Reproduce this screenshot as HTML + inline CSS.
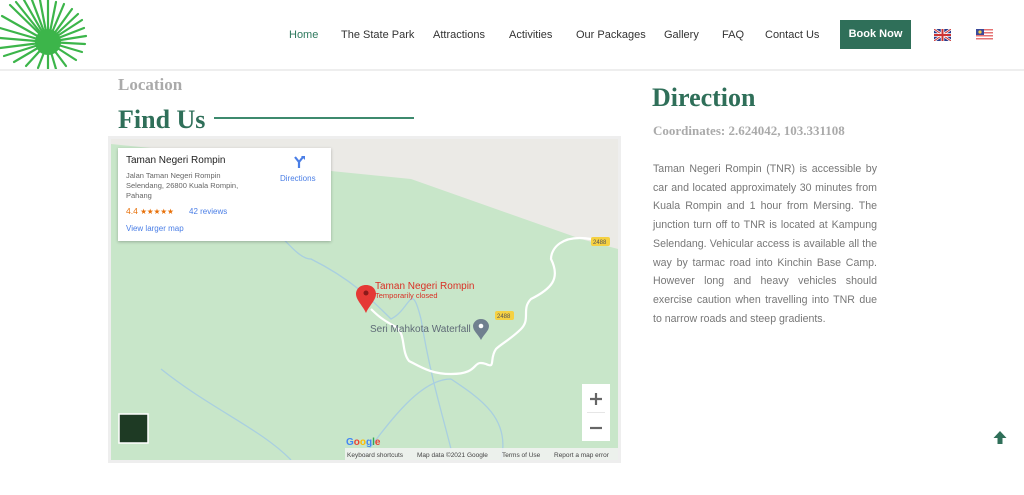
<!DOCTYPE html>
<html><head><meta charset="utf-8"><style>
*{margin:0;padding:0;box-sizing:border-box}
body{width:1024px;height:495px;background:#fff;position:relative;overflow:hidden;font-family:"Liberation Sans",sans-serif}
.a{position:absolute;white-space:nowrap}
.nav{top:29px;font-size:11px;color:#333}
.serif{font-family:"Liberation Serif",serif;font-weight:bold}
.p{position:absolute;left:653px;top:160px;width:224px;font-size:10.6px;line-height:18.7px;color:#777;text-align:justify;white-space:normal}
</style></head><body>
<svg class="a" style="left:0;top:0" width="90" height="70" viewBox="0 0 90 70">
<g stroke="#3cb54a" stroke-width="2.2" stroke-linecap="round">
<line x1="48" y1="42" x2="10" y2="5"/><line x1="48" y1="42" x2="16" y2="2"/><line x1="48" y1="42" x2="24" y2="0"/><line x1="48" y1="42" x2="32" y2="0"/><line x1="48" y1="42" x2="40" y2="0"/><line x1="48" y1="42" x2="48" y2="0"/><line x1="48" y1="42" x2="56" y2="2"/><line x1="48" y1="42" x2="64" y2="4"/><line x1="48" y1="42" x2="72" y2="9"/><line x1="48" y1="42" x2="78" y2="14"/><line x1="48" y1="42" x2="82" y2="20"/><line x1="48" y1="42" x2="84" y2="28"/><line x1="48" y1="42" x2="86" y2="36"/><line x1="48" y1="42" x2="85" y2="44"/><line x1="48" y1="42" x2="82" y2="52"/><line x1="48" y1="42" x2="76" y2="60"/><line x1="48" y1="42" x2="66" y2="66"/><line x1="48" y1="42" x2="56" y2="69"/><line x1="48" y1="42" x2="48" y2="70"/><line x1="48" y1="42" x2="38" y2="68"/><line x1="48" y1="42" x2="26" y2="66"/><line x1="48" y1="42" x2="14" y2="62"/><line x1="48" y1="42" x2="4" y2="56"/><line x1="48" y1="42" x2="0" y2="48"/><line x1="48" y1="42" x2="0" y2="38"/><line x1="48" y1="42" x2="0" y2="28"/><line x1="48" y1="42" x2="2" y2="16"/></g>
<circle cx="48" cy="42" r="13" fill="#3cb54a"/></svg>
<div class="a nav" style="left:289px;color:#2f7a5e">Home</div>
<div class="a nav" style="left:341px">The State Park</div>
<div class="a nav" style="left:433px">Attractions</div>
<div class="a nav" style="left:509px">Activities</div>
<div class="a nav" style="left:576px">Our Packages</div>
<div class="a nav" style="left:664px">Gallery</div>
<div class="a nav" style="left:722px">FAQ</div>
<div class="a nav" style="left:765px">Contact Us</div>
<div class="a" style="left:840px;top:20px;width:71px;height:29px;background:#2f6f59;color:#fff;font-size:11px;font-weight:bold;line-height:29px;text-align:center">Book Now</div>
<svg class="a" style="left:934px;top:29px" width="17" height="12"><rect width="17" height="12" fill="#2a3a8a"/><path d="M0 0L17 12M17 0L0 12" stroke="#fff" stroke-width="2.5"/><path d="M0 0L17 12M17 0L0 12" stroke="#c33" stroke-width="1"/><path d="M8.5 0V12M0 6H17" stroke="#fff" stroke-width="3.5"/><path d="M8.5 0V12M0 6H17" stroke="#c33" stroke-width="2"/></svg>
<svg class="a" style="left:976px;top:29px" width="17" height="12"><rect width="17" height="12" fill="#fff"/><g fill="#e57373"><rect y="0" width="17" height="1.5"/><rect y="3" width="17" height="1.5"/><rect y="6" width="17" height="1.5"/><rect y="9" width="17" height="1.5"/></g><rect width="8" height="6" fill="#3a4a9a"/><circle cx="4" cy="3" r="1.6" fill="#f5d142"/></svg>
<div class="a" style="left:0;top:69px;width:1024px;height:2px;background:#eee"></div>
<div class="a serif" style="left:118px;top:75px;font-size:17px;color:#aaa">Location</div>
<div class="a serif" style="left:118px;top:105px;font-size:26px;color:#2f6f59">Find Us</div>
<div class="a" style="left:214px;top:117px;width:200px;height:2px;background:#3d8a6e"></div>
<div class="a serif" style="left:652px;top:83px;font-size:26px;color:#2f6f59">Direction</div>
<div class="a serif" style="left:653px;top:123px;font-size:13px;color:#aaa">Coordinates: 2.624042, 103.331108</div>
<div class="p">Taman Negeri Rompin (TNR) is accessible by car and located approximately 30 minutes from Kuala Rompin and 1 hour from Mersing. The junction turn off to TNR is located at Kampung Selendang. Vehicular access is available all the way by tarmac road into Kinchin Base Camp. However long and heavy vehicles should exercise caution when travelling into TNR due to narrow roads and steep gradients.</div>
<svg class="a" style="left:992px;top:430px" width="16" height="15"><path d="M8 1L14.5 8H10.5V14H5.5V8H1.5Z" fill="#2f6f59"/></svg>
<div class="a" style="left:108px;top:136px;width:513px;height:327px;background:#eee"></div>
<svg class="a" style="left:111px;top:139px" width="507" height="321" viewBox="0 0 507 321">
<rect width="507" height="321" fill="#c8e6c9"/>
<path d="M0 0H507V110L470 100L300 40L150 25L50 10L0 5Z" fill="#ebeae6"/>
<g fill="none" stroke="#a9cfe0" stroke-width="1.3">
<path d="M115 60C110 90 130 100 140 90C160 70 180 120 200 120C240 140 260 160 280 180C300 170 300 140 310 180C320 240 330 270 340 310"/>
<path d="M340 240C370 260 400 280 390 321"/><path d="M340 240C310 240 280 280 250 321"/>
<path d="M50 230C100 270 150 290 180 321"/>
</g>
<g fill="none" stroke="#fff" stroke-width="2.2">
<path d="M480 100C450 95 440 110 440 120C450 140 440 150 420 160C410 170 420 180 410 190C400 200 390 205 385 210C378 220 385 230 375 225C360 220 370 235 340 235C320 235 310 228 298 222C290 212 295 195 285 188C270 180 265 175 260 170"/>
</g>
<rect x="480" y="98" width="19" height="9" rx="2" fill="#f5d142"/><text x="482" y="105" font-size="6" fill="#555" font-family="Liberation Sans">2488</text>
<rect x="384" y="172" width="19" height="9" rx="2" fill="#f5d142"/><text x="386" y="179" font-size="6" fill="#555" font-family="Liberation Sans">2488</text>
<path d="M255 146C248 146 245 151 245 155C245 161 252 167 255 174C258 167 265 161 265 155C265 151 262 146 255 146Z" fill="#e53935"/><circle cx="255" cy="154" r="2.5" fill="#8b1a1a"/>
<text x="264" y="150" font-size="10" fill="#d93025" font-family="Liberation Sans">Taman Negeri Rompin</text>
<text x="264" y="159" font-size="7.5" fill="#d93025" font-family="Liberation Sans">Temporarily closed</text>
<path d="M370 180C365 180 362 184 362 187C362 192 367 195 370 201C373 195 378 192 378 187C378 184 375 180 370 180Z" fill="#70808f"/><circle cx="370" cy="187" r="2.3" fill="#fff"/>
<text x="259" y="193" font-size="10" fill="#5f6b77" font-family="Liberation Sans">Seri Mahkota Waterfall</text>
<rect x="8" y="275" width="29" height="29" fill="#1e3a24" stroke="#fff" stroke-width="1.5"/>
<rect x="471" y="245" width="28" height="57" fill="#fff"/><rect x="476" y="273" width="18" height="1" fill="#e6e6e6"/>
<path d="M479 260H491M485 254V266" stroke="#666" stroke-width="2.2"/><path d="M479 289H491" stroke="#666" stroke-width="2.2"/>
<text x="235" y="306" font-size="10" font-weight="bold" font-family="Liberation Sans"><tspan fill="#4285f4">G</tspan><tspan fill="#ea4335">o</tspan><tspan fill="#fbbc05">o</tspan><tspan fill="#4285f4">g</tspan><tspan fill="#34a853">l</tspan><tspan fill="#ea4335">e</tspan></text>
<rect x="234" y="309" width="273" height="12" fill="#f2f2f2" opacity=".85"/>
<text x="236" y="318" font-size="6.5" fill="#444" font-family="Liberation Sans">Keyboard shortcuts</text>
<text x="306" y="318" font-size="6.5" fill="#444" font-family="Liberation Sans">Map data ©2021 Google</text>
<text x="391" y="318" font-size="6.5" fill="#444" font-family="Liberation Sans">Terms of Use</text>
<text x="443" y="318" font-size="6.5" fill="#444" font-family="Liberation Sans">Report a map error</text>
</svg>
<div class="a" style="left:118px;top:148px;width:213px;height:93px;background:#fff;box-shadow:0 1px 3px rgba(0,0,0,.25)">
<div class="a" style="left:8px;top:7px;font-size:10px;color:#222">Taman Negeri Rompin</div>
<div class="a" style="left:8px;top:23px;font-size:7.5px;line-height:10px;color:#666;white-space:normal;width:124px">Jalan Taman Negeri Rompin Selendang, 26800 Kuala Rompin, Pahang</div>
<div class="a" style="left:8px;top:58px;font-size:8.5px;color:#e8710a">4.4 <span style="font-size:7.5px">★★★★★</span></div>
<div class="a" style="left:71px;top:59px;font-size:8px;color:#4a7ee6">42 reviews</div>
<div class="a" style="left:8px;top:76px;font-size:8px;color:#4a7ee6">View larger map</div>
<svg class="a" style="left:174px;top:7px" width="14" height="14"><path d="M3 2L7 7V13M11 2L7 7" stroke="#4a7ee6" stroke-width="2.2" fill="none"/><path d="M9 1H13V5Z" fill="#4a7ee6"/></svg>
<div class="a" style="left:162px;top:26px;font-size:8px;color:#4a7ee6">Directions</div>
</div>
</body></html>
